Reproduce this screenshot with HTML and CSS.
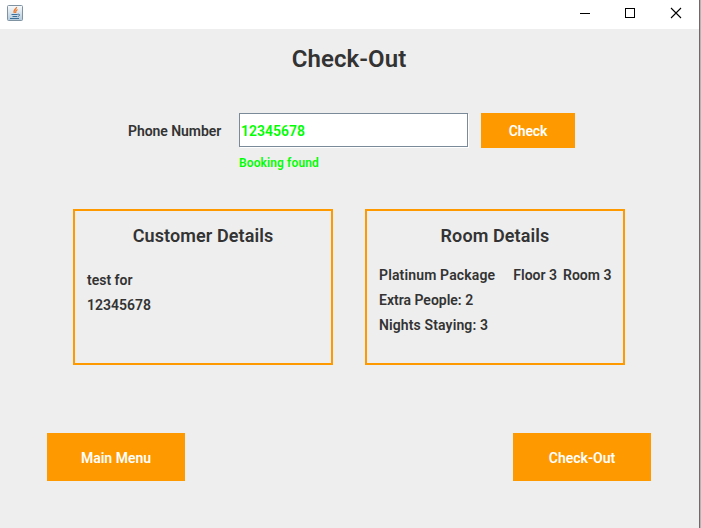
FILE: index.html
```html
<!DOCTYPE html>
<html lang="en">
<head>
<meta charset="utf-8">
<title>Check-Out</title>
<link rel="stylesheet" href="styles.css">
</head>
<body>
<div class="window">
  <header class="titlebar">
    <svg class="app-icon" width="16" height="16" viewBox="0 0 16 16">
      <defs><linearGradient id="tile" x2="0" y2="1"><stop stop-color="#fafcfd"/><stop offset="1" stop-color="#b4cbdc"/></linearGradient></defs>
      <rect x=".5" y=".5" width="15" height="15" rx="1" fill="url(#tile)" stroke="#7f93a3"/>
      <path d="M9.5 2C10 3.8 5.5 4.8 7.4 8M10.5 4.5C8.4 5.5 8.5 6.5 8.6 8" fill="none" stroke="#ee7a2d" stroke-width="1.3"/>
      <path d="M4.5 9.5h6M5.5 11.5h4.5M3 13.5h9M10.5 9.3c3-.6 2.6 1.8.2 2.2" fill="none" stroke="#3c6f98"/>
    </svg>
    <svg class="controls" width="138" height="28" viewBox="0 0 138 28" fill="none" stroke="#000" shape-rendering="crispEdges">
      <path d="M18 13.5h10"/>
      <rect x="63.5" y="8.5" width="9" height="9"/>
      <path d="M109 8l10 10m0-10l-10 10" stroke-width="1.1" shape-rendering="auto"/>
    </svg>
  </header>
  <main class="content">
    <h1 class="title">Check-Out</h1>
    <div class="search">
      <label class="label" for="phone">Phone Number</label>
      <input class="phone" id="phone" value="12345678">
      <button class="button check">Check</button>
      <p class="status">Booking found</p>
    </div>
    <div class="cards">
      <section class="card">
        <h2>Customer Details</h2>
        <div class="lines customer"><p>test for</p><p>12345678</p></div>
      </section>
      <section class="card">
        <h2>Room Details</h2>
        <div class="lines room">
          <p class="package"><span class="name">Platinum Package</span><span class="floor">Floor 3</span><span>Room 3</span></p>
          <p>Extra People: 2</p><p class="nights">Nights Staying: 3</p>
        </div>
      </section>
    </div>
    <footer class="actions"><button class="button">Main Menu</button><button class="button">Check-Out</button></footer>
  </main>
</div>
</body>
</html>
```
FILE: styles.css
```css
* { box-sizing: border-box; margin: 0; padding: 0; }
body { width: 701px; height: 528px; overflow: hidden; background: #b4b4b4; font: 600 14px/25px Roboto, sans-serif; color: #333; }
.window { width: 700px; height: 528px; border-right: 1px solid #6b6b6b; background: #eee; }
.titlebar { height: 29px; background: #fff; display: flex; justify-content: space-between; }
.app-icon { margin: 5px 0 0 7px; }
.controls { margin-right: -1px; }
.title { height: 60px; padding-right: 1px; font-size: 24px; font-weight: 600; line-height: 60px; letter-spacing: .06px; text-align: center; }
.search { display: grid; grid-template-columns: 111px 229px 94px; grid-template-rows: 35px 30px; margin: 24px 0 0 128px; }
.label { line-height: 36px; letter-spacing: -.06px; }
.phone { height: 34px; border: 1px solid #7a8a99; box-shadow: 1px 1px #fff; padding: 3px 1px 1px; font: inherit; color: #0f0; background: #fff; outline: 0; }
.button { border: 0; padding-top: 2px; background: #ff9900; color: #fff; font: inherit; }
.check { margin-left: 13px; width: 94px; letter-spacing: -.1px; }
.status { grid-column: 2; font-size: 12px; line-height: 31px; letter-spacing: .12px; color: #0f0; }
.cards { display: flex; gap: 32px; margin: 31px 0 0 73px; }
.card { width: 260px; height: 156px; border: 2px solid #ff9900; padding: 12px; }
.card h2 { font-size: 18px; font-weight: 600; line-height: 26px; letter-spacing: .1px; text-align: center; }
.customer { padding-top: 19px; }
.room { padding-top: 14px; }
.package { display: flex; white-space: nowrap; }
.name { letter-spacing: .15px; }
.nights { letter-spacing: .12px; }
.floor { margin: 0 6px 0 18px; }
.actions { display: flex; justify-content: space-between; margin: 68px 48px 0 47px; }
.actions .button { width: 138px; height: 48px; }
```
